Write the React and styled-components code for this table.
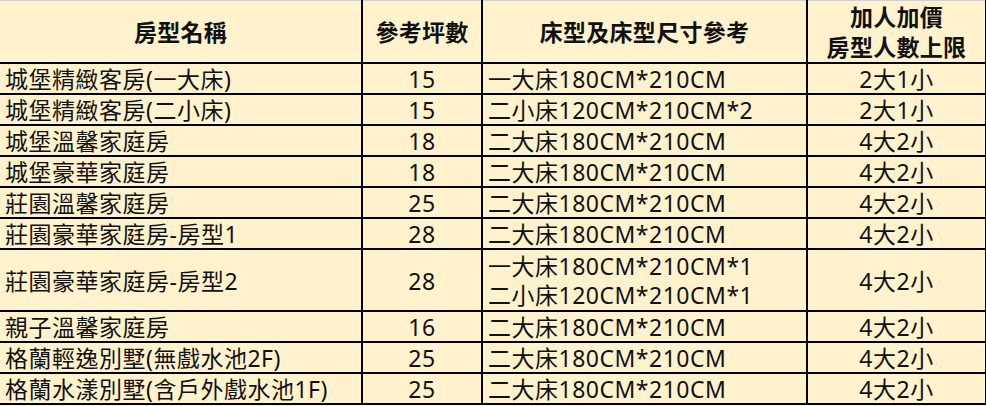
import React from 'react'
import styled, { createGlobalStyle } from 'styled-components'

const Global = createGlobalStyle`
  html, body {
    margin: 0;
    padding: 0;
    background: #fff2cc;
  }
  body {
    font-family: "Noto Sans", "Noto Sans CJK TC", sans-serif;
    color: #111;
  }
`

const Table = styled.table`
  border-collapse: collapse;
  table-layout: fixed;
  width: 986px;
  background: #fff2cc;
  border-top: 1px solid #d0d0d0;
`

const Col = styled.col`
  width: ${(p) => p.$w}px;
`

const HeadCell = styled.th`
  height: 61px;
  padding: 0;
  font-size: 23px;
  font-weight: 700;
  line-height: 30px;
  letter-spacing: 0.3px;
  text-align: center;
  border-right: 2px solid #000;
  border-bottom: 2px solid #000;
`

const Cell = styled.td`
  height: ${(p) => (p.$tall ? 58 : 27)}px;
  padding: 2px ${(p) => (p.$align === 'left' ? '5px' : '0')} 0;
  font-size: 23px;
  line-height: ${(p) => (p.$tall ? 29 : 27)}px;
  letter-spacing: 0.5px;
  text-align: ${(p) => p.$align || 'center'};
  white-space: nowrap;
  border-right: 2px solid #000;
  border-bottom: 2px solid #000;
`

const rooms = [
  { name: '城堡精緻客房(一大床)', size: 15, beds: ['一大床180CM*210CM'], cap: '2大1小' },
  { name: '城堡精緻客房(二小床)', size: 15, beds: ['二小床120CM*210CM*2'], cap: '2大1小' },
  { name: '城堡溫馨家庭房', size: 18, beds: ['二大床180CM*210CM'], cap: '4大2小' },
  { name: '城堡豪華家庭房', size: 18, beds: ['二大床180CM*210CM'], cap: '4大2小' },
  { name: '莊園溫馨家庭房', size: 25, beds: ['二大床180CM*210CM'], cap: '4大2小' },
  { name: '莊園豪華家庭房-房型1', size: 28, beds: ['二大床180CM*210CM'], cap: '4大2小' },
  { name: '莊園豪華家庭房-房型2', size: 28, beds: ['一大床180CM*210CM*1', '二小床120CM*210CM*1'], cap: '4大2小' },
  { name: '親子溫馨家庭房', size: 16, beds: ['二大床180CM*210CM'], cap: '4大2小' },
  { name: '格蘭輕逸別墅(無戲水池2F)', size: 25, beds: ['二大床180CM*210CM'], cap: '4大2小' },
  { name: '格蘭水漾別墅(含戶外戲水池1F)', size: 25, beds: ['二大床180CM*210CM'], cap: '4大2小' },
]

export default function App() {
  return (
    <>
      <Global />
      <Table>
        <colgroup>
          <Col $w={362} />
          <Col $w={120} />
          <Col $w={325} />
          <Col $w={179} />
        </colgroup>
        <thead>
          <tr>
            <HeadCell>房型名稱</HeadCell>
            <HeadCell>參考坪數</HeadCell>
            <HeadCell>床型及床型尺寸參考</HeadCell>
            <HeadCell>
              加人加價
              <br />
              房型人數上限
            </HeadCell>
          </tr>
        </thead>
        <tbody>
          {rooms.map((r) => {
            const tall = r.beds.length > 1
            return (
              <tr key={r.name}>
                <Cell $align="left" $tall={tall}>{r.name}</Cell>
                <Cell $tall={tall}>{r.size}</Cell>
                <Cell $align="left" $tall={tall}>
                  {r.beds.map((b, i) => (
                    <React.Fragment key={b}>
                      {i > 0 && <br />}
                      {b}
                    </React.Fragment>
                  ))}
                </Cell>
                <Cell $tall={tall}>{r.cap}</Cell>
              </tr>
            )
          })}
        </tbody>
      </Table>
    </>
  )
}
